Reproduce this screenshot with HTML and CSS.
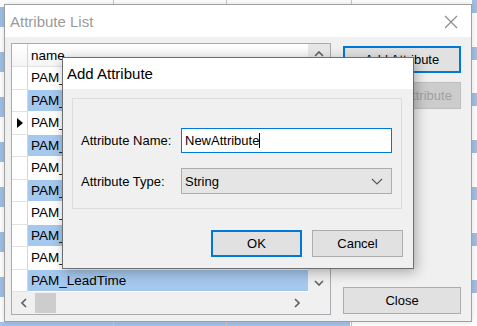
FILE: index.html
```html
<!DOCTYPE html>
<html lang="en">
    <head>
        <meta charset="UTF-8">
        <title>Attribute List</title>
        <link rel="stylesheet" href="styles.css">
    </head>

    <body>
        <div class="window">
            <div class="titlebar">
                <span class="title">Attribute List</span>
                <svg class="close-x" width="14" height="14" viewBox="0 0 14 14">
                    <path d="M1 1L13 13M13 1L1 13" stroke="#8a8a8a" stroke-width="1.1" fill="none"/>
                </svg>
            </div>

            <div class="client">
                <div class="grid">
                    <div class="grid-main">
                        <div class="rows">
                            <div class="row head"><div class="rh"></div><div class="cell">name</div></div>
                            <div class="row"><div class="rh"></div><div class="cell">PAM_Cost</div></div>
                            <div class="row sel"><div class="rh"></div><div class="cell">PAM_Category</div></div>
                            <div class="row"><div class="rh">
                                <svg width="6" height="10" viewBox="0 0 6 10"><polygon points="0,0 6,5 0,10" fill="#000"/></svg>
                            </div><div class="cell">PAM_Description</div></div>
                            <div class="row sel"><div class="rh"></div><div class="cell">PAM_Vendor</div></div>
                            <div class="row"><div class="rh"></div><div class="cell">PAM_Weight</div></div>
                            <div class="row sel"><div class="rh"></div><div class="cell">PAM_Material</div></div>
                            <div class="row"><div class="rh"></div><div class="cell">PAM_Finish</div></div>
                            <div class="row sel"><div class="rh"></div><div class="cell">PAM_PartNumber</div></div>
                            <div class="row"><div class="rh"></div><div class="cell">PAM_Revision</div></div>
                            <div class="row sel"><div class="rh"></div><div class="cell">PAM_LeadTime</div></div>
                        </div>
                        <div class="vscroll">
                            <svg width="10" height="6" viewBox="0 0 10 6"><path d="M1 5L5 1L9 5" stroke="#606060" stroke-width="1.6" fill="none"/></svg>
                            <svg width="10" height="6" viewBox="0 0 10 6"><path d="M1 1L5 5L9 1" stroke="#606060" stroke-width="1.6" fill="none"/></svg>
                        </div>
                    </div>
                    <div class="hscroll">
                        <svg class="arrow-l" width="6" height="10" viewBox="0 0 6 10"><path d="M5 1L1 5L5 9" stroke="#606060" stroke-width="1.6" fill="none"/></svg>
                        <div class="thumb"></div>
                        <svg class="arrow-r" width="6" height="10" viewBox="0 0 6 10"><path d="M1 1L5 5L1 9" stroke="#606060" stroke-width="1.6" fill="none"/></svg>
                        <div class="corner"></div>
                    </div>
                </div>

                <div class="side">
                    <button class="btn focus">Add Attribute</button>
                    <button class="btn disabled">Remove Attribute</button>
                    <button class="btn bottom">Close</button>
                </div>
            </div>

            <div class="dialog">
                <div class="dlg-title">Add Attribute</div>
                <div class="dlg-body">
                    <div class="groupbox">
                        <div class="field">
                            <label>Attribute Name:</label>
                            <div class="textbox">NewAttribute<span class="caret"></span></div>
                        </div>
                        <div class="field">
                            <label>Attribute Type:</label>
                            <div class="combo">
                                <span>String</span>
                                <svg width="12" height="7" viewBox="0 0 12 7"><path d="M1 1L6 6L11 1" stroke="#555" stroke-width="1.1" fill="none"/></svg>
                            </div>
                        </div>
                    </div>
                    <div class="dlg-buttons">
                        <button class="btn focus small">OK</button>
                        <button class="btn small">Cancel</button>
                    </div>
                </div>
            </div>
        </div>
    </body>
</html>
```

FILE: styles.css
```css
* {
    box-sizing: border-box;
    font-family: "Liberation Sans", Arial, sans-serif;
}

body {
    margin: 0;
    width: 477px;
    height: 326px;
    overflow: hidden;
    background:
        linear-gradient(#c9c9c9, #c9c9c9) 113px 0 / 1px 100% no-repeat,
        linear-gradient(#c9c9c9, #c9c9c9) 226px 0 / 1px 100% no-repeat,
        linear-gradient(#c9c9c9, #c9c9c9) 351px 0 / 1px 100% no-repeat,
        linear-gradient(#a3c3e8, #a3c3e8) 0 322px / 350px 4px no-repeat,
        repeating-linear-gradient(#fff 0 7px, #9ebfe6 7px 27px, #fff 27px 45px) 0 0 / 4px 100% no-repeat,
        repeating-linear-gradient(#9ebfe6 0 13px, #fff 13px 46.7px) 472px 0 / 5px 100% no-repeat,
        #fff;
    padding: 4px 0 0 4px;
}

.window {
    position: relative;
    width: 468px;
    height: 318px;
    border: 1px solid #a0a0a0;
    background: #f0f0f0;
    box-shadow: 0 0 6px rgba(0, 0, 0, 0.15);
}

.titlebar {
    height: 32px;
    background: #fff;
    display: flex;
    align-items: center;
    justify-content: space-between;
    padding: 0 13px 0 5px;
}

.title {
    font-size: 15px;
    color: #9a9a9a;
}

.close-x {
    margin-top: 1px;
}

.client {
    display: flex;
    padding: 6px 0 0 6px;
    gap: 12px;
}

.grid {
    width: 320px;
    height: 272px;
    border: 1px solid #a7abb0;
    background: #f0f0f0;
    display: flex;
    flex-direction: column;
}

.grid-main {
    display: flex;
    height: 248px;
}

.rows {
    width: 296px;
    display: flex;
    flex-direction: column;
}

.row {
    display: flex;
    height: 22.5px;
    background: #fff;
}

.row.head {
    height: 23px;
    background: linear-gradient(#fff, #f4f4f4);
}

.rh {
    width: 16px;
    border-right: 1px solid #d6d6d6;
    border-bottom: 1px solid #e2e2e2;
    display: flex;
    align-items: center;
    justify-content: center;
}

.cell {
    flex: 1;
    font-size: 13.5px;
    color: #000;
    padding-left: 3px;
    display: flex;
    align-items: center;
    border-bottom: 1px solid #fff;
    white-space: nowrap;
}

.row.head .cell {
    border-bottom-color: #e2e2e2;
}

.row.sel .cell {
    background: #a5c8ee;
}

.vscroll {
    width: 22px;
    display: flex;
    flex-direction: column;
    justify-content: space-between;
    align-items: center;
    padding: 7px 0 6px;
    background: linear-gradient(#e6e6e6, #f0f0f0 30px);
}

.hscroll {
    height: 22px;
    display: flex;
    align-items: center;
    position: relative;
}

.arrow-l {
    margin-left: 9px;
}

.thumb {
    width: 21px;
    height: 20px;
    background: #cdcdcd;
    margin-left: 8px;
}

.arrow-r {
    margin-left: 238px;
}

.corner {
    flex: 1;
}

.side {
    width: 118px;
    height: 272px;
    display: flex;
    flex-direction: column;
    gap: 9px;
    padding: 3px 0 1px;
}

.btn {
    height: 27px;
    font-size: 13px;
    color: #000;
    background: #e1e1e1;
    border: 1px solid #adadad;
    padding: 0;
}

.btn.focus {
    border: 2px solid #0078d7;
}

.btn.disabled {
    background: #cccccc;
    border-color: #bfbfbf;
    color: #a0a0a0;
}

.btn.bottom {
    margin-top: auto;
}

.dialog {
    position: absolute;
    left: 57px;
    top: 52px;
    width: 352px;
    height: 212px;
    border: 1px solid #6e6e6e;
    background: #f0f0f0;
    box-shadow: 2px 3px 12px rgba(0, 0, 0, 0.3);
}

.dlg-title {
    height: 31px;
    background: #fff;
    font-size: 15px;
    color: #000;
    padding-left: 4px;
    display: flex;
    align-items: center;
}

.dlg-body {
    padding: 9px 10px 0 9px;
}

.groupbox {
    width: 330px;
    height: 111px;
    border: 1px solid #dcdcdc;
    padding: 29px 9px 0 8px;
    display: flex;
    flex-direction: column;
    gap: 15px;
}

.field {
    display: flex;
    align-items: center;
}

.field label {
    width: 100px;
    font-size: 13px;
    color: #000;
}

.textbox {
    width: 211px;
    height: 25px;
    background: #fff;
    border: 1px solid #0078d7;
    font-size: 13px;
    color: #000;
    padding-left: 3px;
    display: flex;
    align-items: center;
}

.caret {
    display: inline-block;
    width: 1px;
    height: 15px;
    background: #000;
}

.combo {
    width: 211px;
    height: 26px;
    background: #e5e5e5;
    border: 1px solid #adadad;
    font-size: 13px;
    color: #000;
    padding: 0 8px 0 3px;
    display: flex;
    align-items: center;
    justify-content: space-between;
}

.dlg-buttons {
    display: flex;
    justify-content: flex-end;
    gap: 10px;
    margin-top: 21px;
}

.btn.small {
    width: 91px;
    height: 27px;
}
```
